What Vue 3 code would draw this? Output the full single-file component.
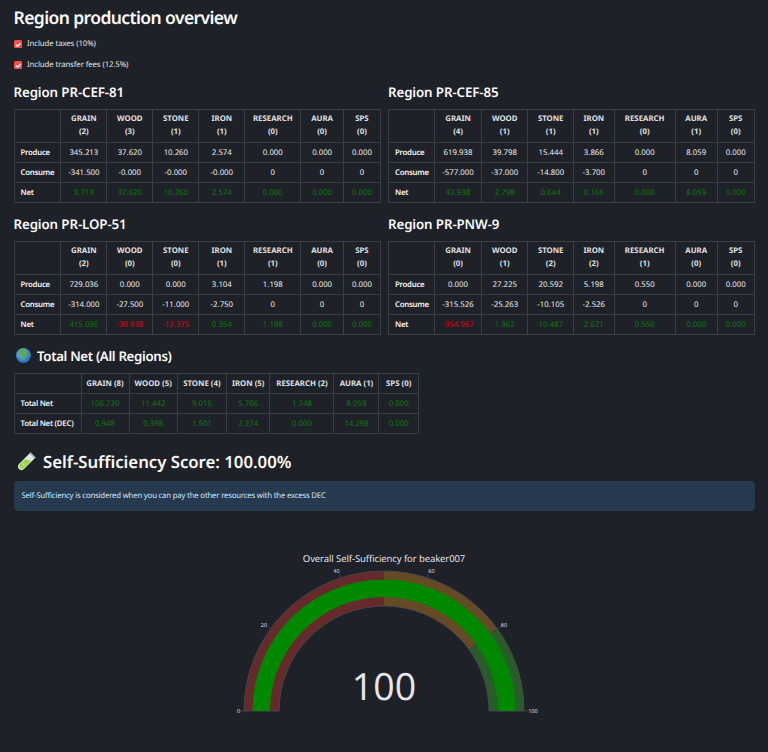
<script setup>
const resources = ['GRAIN', 'WOOD', 'STONE', 'IRON', 'RESEARCH', 'AURA', 'SPS']

const leftCols = [46.7, 46.3, 45.7, 46.3, 45.7, 56.3, 42.3, 37.4]
const rightCols = [46, 47, 46.4, 45.6, 40.7, 61, 42, 37]

const regions = [
  {
    name: 'PR-CEF-81',
    cols: leftCols,
    counts: [2, 3, 1, 1, 0, 0, 0],
    produce: ['345.213', '37.620', '10.260', '2.574', '0.000', '0.000', '0.000'],
    consume: ['-341.500', '-0.000', '-0.000', '-0.000', '0', '0', '0'],
    net: ['3.713', '37.620', '10.260', '2.574', '0.000', '0.000', '0.000']
  },
  {
    name: 'PR-CEF-85',
    cols: rightCols,
    counts: [4, 1, 1, 1, 0, 1, 0],
    produce: ['619.938', '39.798', '15.444', '3.866', '0.000', '8.059', '0.000'],
    consume: ['-577.000', '-37.000', '-14.800', '-3.700', '0', '0', '0'],
    net: ['42.938', '2.798', '0.644', '0.166', '0.000', '8.059', '0.000']
  },
  {
    name: 'PR-LOP-51',
    cols: leftCols,
    counts: [2, 0, 0, 1, 1, 0, 0],
    produce: ['729.036', '0.000', '0.000', '3.104', '1.198', '0.000', '0.000'],
    consume: ['-314.000', '-27.500', '-11.000', '-2.750', '0', '0', '0'],
    net: ['415.036', '-30.938', '-12.375', '0.354', '1.198', '0.000', '0.000']
  },
  {
    name: 'PR-PNW-9',
    cols: rightCols,
    counts: [0, 1, 2, 2, 1, 0, 0],
    produce: ['0.000', '27.225', '20.592', '5.198', '0.550', '0.000', '0.000'],
    consume: ['-315.526', '-25.263', '-10.105', '-2.526', '0', '0', '0'],
    net: ['-354.967', '1.962', '10.487', '2.671', '0.550', '0.000', '0.000']
  }
]

const totalCols = [67, 48, 48.4, 49, 43.6, 64, 45, 39.4]
const totalHead = ['GRAIN (8)', 'WOOD (5)', 'STONE (4)', 'IRON (5)', 'RESEARCH (2)', 'AURA (1)', 'SPS (0)']
const totalRows = [
  { label: 'Total Net', values: ['106.720', '11.442', '9.016', '5.766', '1.748', '8.059', '0.000'] },
  { label: 'Total Net (DEC)', values: ['0.948', '0.398', '1.501', '2.274', '0.000', '14.298', '0.000'] }
]

const netClass = (v) => (v.startsWith('-') ? 'neg' : 'pos')

// gauge geometry, the svg origin sits at the left edge of the page
const cx = 384
const cy = 166
const point = (value, r) => {
  const a = Math.PI * (1 - value / 100)
  return [cx + r * Math.cos(a), cy - r * Math.sin(a)]
}
const sector = (from, to, r0, r1) => {
  const [ax, ay] = point(from, r1)
  const [bx, by] = point(to, r1)
  const [dx, dy] = point(to, r0)
  const [ex, ey] = point(from, r0)
  return `M${ax} ${ay}A${r1} ${r1} 0 0 1 ${bx} ${by}L${dx} ${dy}A${r0} ${r0} 0 0 0 ${ex} ${ey}Z`
}
const steps = [
  { from: 0, to: 50, color: '#672a2c' },
  { from: 50, to: 80, color: '#654a26' },
  { from: 80, to: 100, color: '#2a5c2b' }
]
const ticks = [0, 20, 40, 60, 80, 100].map((v) => {
  const [x1, y1] = point(v, 140.5)
  const [x2, y2] = point(v, 143.5)
  return { v, x1, y1, x2, y2 }
})
const tickLabels = [
  { v: 0, x: 238.5, y: 168 },
  { v: 20, x: 264, y: 82 },
  { v: 40, x: 336.5, y: 28 },
  { v: 60, x: 431.5, y: 28 },
  { v: 80, x: 504, y: 82 },
  { v: 100, x: 533, y: 168 }
]
</script>

<template>
  <main class="page">
    <h1 class="title">Region production overview</h1>

    <label class="check" v-for="text in ['Include taxes (10%)', 'Include transfer fees (12.5%)']" :key="text">
      <span class="box">
        <svg width="9" height="9" viewBox="0 0 9 9"><path d="M2 4.6l1.8 1.8L7 2.9" fill="none" stroke="#fff" stroke-width="1.4" /></svg>
      </span>
      {{ text }}
    </label>

    <section class="regions">
      <div v-for="region in regions" :key="region.name" class="region">
        <h3 class="region-name">Region {{ region.name }}</h3>
        <table class="data">
          <colgroup>
            <col v-for="(w, i) in region.cols" :key="i" :style="{ width: w + 'px' }" />
          </colgroup>
          <thead>
            <tr class="tall">
              <th></th>
              <th v-for="(res, i) in resources" :key="res">{{ res }}<br />({{ region.counts[i] }})</th>
            </tr>
          </thead>
          <tbody>
            <tr>
              <th class="row-name">Produce</th>
              <td v-for="(v, i) in region.produce" :key="i">{{ v }}</td>
            </tr>
            <tr>
              <th class="row-name">Consume</th>
              <td v-for="(v, i) in region.consume" :key="i">{{ v }}</td>
            </tr>
            <tr>
              <th class="row-name">Net</th>
              <td v-for="(v, i) in region.net" :key="i" :class="netClass(v)">{{ v }}</td>
            </tr>
          </tbody>
        </table>
      </div>
    </section>

    <h3 class="total-name">
      <svg class="globe" width="15" height="15" viewBox="0 0 30 30">
        <defs>
          <radialGradient id="sea" cx="40%" cy="35%" r="70%">
            <stop offset="0" stop-color="#6cc4f0" />
            <stop offset="1" stop-color="#1c63b8" />
          </radialGradient>
        </defs>
        <circle cx="15" cy="15" r="15" fill="url(#sea)" />
        <path d="M9 2c3-1.500 8-1.500 10 0 1 2-2 3-1 5 1 3 5 2 5 6 0 3-3 4-4 7-1 3-3 5-5 4-1-3 0-6-2-8-3-1-6-2-6-6 0-4 1-6 3-8z" fill="#5da84a" />
        <path d="M25 9c2 1 4 4 4 7-2 1-3-1-4-3-1-1-1-3 0-4z" fill="#4f9a44" />
      </svg>
      Total Net (All Regions)
    </h3>
    <table class="data total">
      <colgroup>
        <col v-for="(w, i) in totalCols" :key="i" :style="{ width: w + 'px' }" />
      </colgroup>
      <thead>
        <tr>
          <th></th>
          <th v-for="head in totalHead" :key="head">{{ head }}</th>
        </tr>
      </thead>
      <tbody>
        <tr v-for="row in totalRows" :key="row.label">
          <th class="row-name">{{ row.label }}</th>
          <td v-for="(v, i) in row.values" :key="i" class="pos">{{ v }}</td>
        </tr>
      </tbody>
    </table>

    <h2 class="score">
      <svg class="tube" width="20" height="20" viewBox="0 0 40 40">
        <path d="M27 3l10 10L14 36c-3 3-7 3-10 0s-3-7 0-10z" fill="#dfeaf0" />
        <path d="M17 16l11 4-14 14c-2.500 2.500-5.500 2.500-8 0s-2.500-5.500 0-8z" fill="#9bd64a" />
        <path d="M27 3l10 10-2 2L25 5z" fill="#8fb8d8" />
        <circle cx="13" cy="27" r="2" fill="#c8ef7a" />
      </svg>
      Self-Sufficiency Score: 100.00%
    </h2>

    <div class="info">Self-Sufficiency is considered when you can pay the other resources with the excess DEC</div>

    <svg class="gauge" width="768" height="180" viewBox="0 0 768 180">
      <text x="384" y="17" text-anchor="middle" class="gauge-title">Overall Self-Sufficiency for beaker007</text>
      <path v-for="s in steps" :key="s.from" :d="sector(s.from, s.to, 105, 140)" :fill="s.color" />
      <path :d="sector(0, 100, 105, 140)" fill="none" stroke="#44464c" stroke-width="1" />
      <path :d="sector(0, 100, 114, 131.500)" fill="#008800" />
      <line v-for="t in ticks" :key="t.v" :x1="t.x1" :y1="t.y1" :x2="t.x2" :y2="t.y2" stroke="#44464c" stroke-width="1" />
      <text v-for="t in tickLabels" :key="t.v" :x="t.x" :y="t.y" text-anchor="middle" class="gauge-tick">{{ t.v }}</text>
      <text x="384" y="155" text-anchor="middle" class="gauge-value">100</text>
    </svg>
  </main>
</template>

<style>
html,
body {
  background: #1f2128;
}
</style>

<style scoped>
.page {
  width: 768px;
  height: 752px;
  overflow: hidden;
  box-sizing: border-box;
  padding: 6px 13.500px 0;
  background: #1f2128;
  color: #fafafa;
  font-family: "Noto Sans", "Liberation Sans", sans-serif;
  text-rendering: geometricPrecision;
}

.title {
  margin: 0 0 8px;
  font-size: 17.500px;
  line-height: 24px;
  font-weight: 600;
  letter-spacing: -0.6px;
}

.check {
  display: flex;
  align-items: center;
  gap: 5px;
  height: 12px;
  margin-bottom: 9px;
  font-size: 7.800px;
  letter-spacing: -0.1px;
  color: #e4e4e4;
}

.box {
  display: flex;
  align-items: center;
  justify-content: center;
  width: 8.500px;
  height: 8.500px;
  border-radius: 1.500px;
  background: #ff4b4b;
}

.regions {
  display: grid;
  grid-template-columns: 366.500px 366.500px;
  column-gap: 8px;
  margin-top: 10px;
}

.region-name,
.total-name {
  margin: 0;
  height: 28px;
  font-size: 13.300px;
  line-height: 20px;
  font-weight: 600;
  letter-spacing: -0.1px;
  box-sizing: border-box;
  padding-top: 1px;
}

.region {
  height: 132px;
}

.data {
  border-collapse: collapse;
  table-layout: fixed;
  width: 366.500px;
  font-size: 7.800px;
}

.data th,
.data td {
  border: 1px solid #3b3d44;
  padding: 0 2px;
  height: 19px;
  text-align: center;
  white-space: nowrap;
  color: #eeeeee;
}

.data th {
  font-weight: 700;
  color: #e0e0e0;
}

.data .tall th {
  height: 32px;
  line-height: 13.500px;
}

.data .row-name {
  text-align: left;
  padding-left: 6px;
  font-weight: 600;
  letter-spacing: -0.25px;
  color: #f4f4f4;
}

.data .pos {
  color: #0d7a0d;
}

.data .neg {
  color: #e00010;
}

.total-name {
  display: flex;
  align-items: center;
  gap: 6px;
  height: 27px;
  padding: 0 0 8px 2.500px;
  margin-top: 1px;
  letter-spacing: -0.35px;
}

.data.total {
  width: 404px;
}

.score {
  display: flex;
  align-items: center;
  gap: 6px;
  height: 24px;
  margin: 15px 0 0;
  padding-left: 3.500px;
  font-size: 16.800px;
  font-weight: 600;
  letter-spacing: -0.03px;
}

.info {
  margin-top: 8px;
  height: 30px;
  line-height: 30px;
  padding-left: 8px;
  border-radius: 4px;
  background: #26394f;
  color: #c7ebff;
  font-size: 7.800px;
  letter-spacing: -0.2px;
}

.gauge {
  display: block;
  margin: 34px 0 0 -13.500px;
}

.gauge-title {
  fill: #dfe3ec;
  font-size: 9.500px;
  letter-spacing: -0.1px;
}

.gauge-tick {
  fill: #d4dcee;
  font-size: 5.500px;
}

.gauge-value {
  fill: #e6e8ee;
  font-family: "Open Sans", sans-serif;
  font-size: 37.500px;
}
</style>
